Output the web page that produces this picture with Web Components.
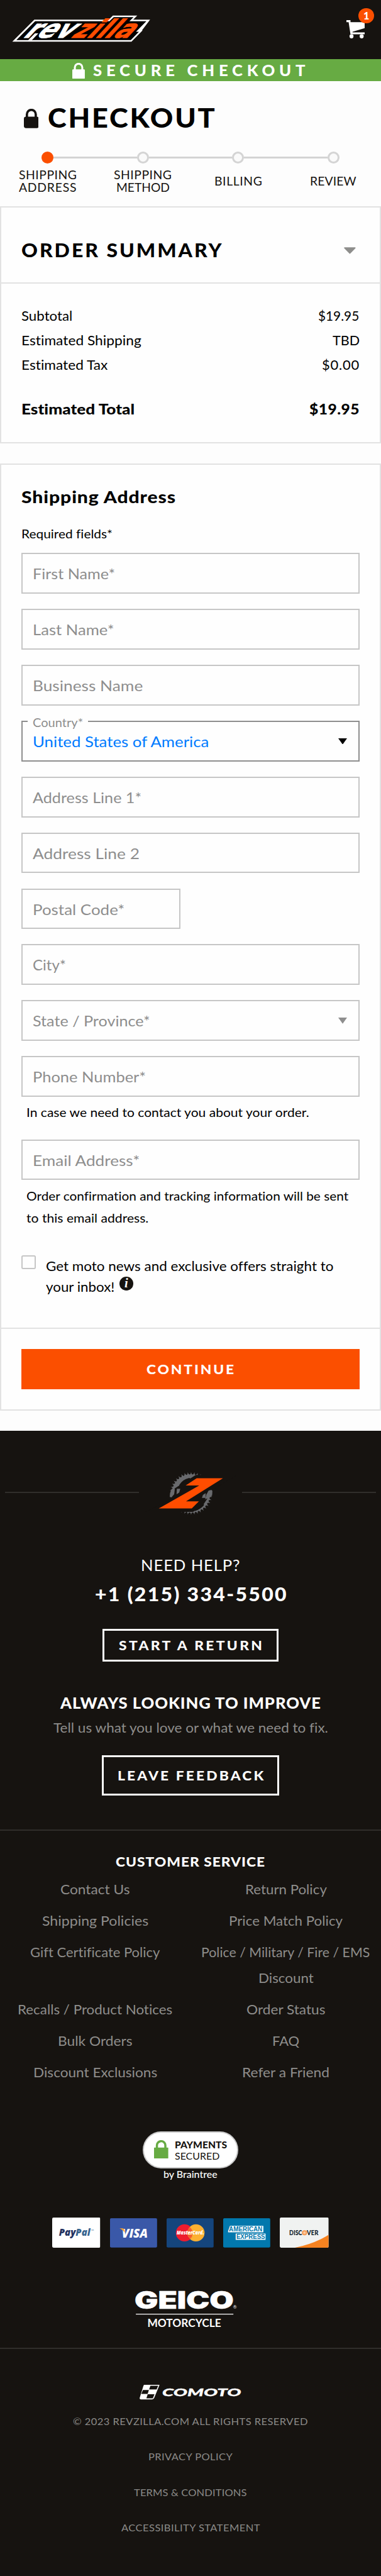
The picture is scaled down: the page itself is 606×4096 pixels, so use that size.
<!DOCTYPE html>
<html lang="en">
<head>
<meta charset="utf-8">
<title>RevZilla – Checkout</title>
<style>
/* 1rem = 100 design units on a 1125-unit wide page */
html{font-size:53.8667px}
body{margin:0;background:#fdfdfd;color:#000;font:400 .385rem/1.2 Lato,"Open Sans",sans-serif;overflow-x:hidden}
</style>
</head>
<body>
<checkout-page></checkout-page>
<script>
const define = (name, css, html, setup) => customElements.define(name, class extends HTMLElement {
  connectedCallback() {
    if (this.shadowRoot) return;
    const root = this.attachShadow({ mode: 'open' });
    const t = document.createElement('template');
    t.innerHTML = `<style>*{box-sizing:border-box}:host{display:block;box-sizing:border-box}svg{display:block}${css}</style>${typeof html === 'function' ? html(this) : html}`;
    root.append(t.content.cloneNode(true));
    if (setup) setup(this, root);
  }
});

/* One line of type, widened and tracked to a measure given in design units */
define('fit-text', `:host{display:inline-block;white-space:nowrap;text-align:left}span{display:inline-block;font-variant-ligatures:none;transform-origin:0 0}`,
  '<span><slot></slot></span>', (el, root) => {
    const span = root.querySelector('span');
    const fs = parseFloat(getComputedStyle(el).fontSize);
    const target = el.getAttribute('w') * .538667 + fs * .08;
    const natural = span.getBoundingClientRect().width;
    const text = el.textContent;
    const limit = text === text.toUpperCase() ? 1.06 : 1.13;
    const sx = Math.max(1, Math.min(limit, target / natural));
    span.style.letterSpacing = ((target / sx - natural) / (text.length - 1)).toFixed(3) + 'px';
    span.style.transform = `scaleX(${sx.toFixed(4)})`;
    el.style.width = target + 'px';
  });

define('brand-logo', `:host{width:4.1rem}svg{width:4.1rem;height:.8rem;overflow:visible}`, `
<svg viewBox="35 44 410 80" role="img" aria-label="RevZilla">
  <path d="M36 122.500 101 57.500H321L333 45.500H405L393 57.500H443L419 89H421L388 122.500Z" fill="#fff"/>
  <path d="M48 118 103.500 62H323L335.500 50H394L382 62H432L401.500 93H410L386 118Z" fill="#000"/>
  <path d="M83 118 103 98H113L94 118Z" fill="#fff"/>
  <g font-family="DejaVu Sans" font-weight="700" font-size="75" transform="translate(0 111) skewX(-43)">
    <text x="64" y="0" textLength="140" lengthAdjust="spacingAndGlyphs" fill="#fff" stroke="#fff" stroke-width="1.500">rev</text>
    <text x="207" y="0" textLength="174" lengthAdjust="spacingAndGlyphs" fill="#ff4d00" stroke="#ff4d00" stroke-width="1.500">zilla</text>
  </g>
</svg>`);

define('cart-button', `:host{position:relative;width:.54rem;height:.54rem}svg{width:.54rem;height:.54rem}
b{position:absolute;left:.36rem;top:-.36rem;width:.45rem;height:.45rem;border-radius:50%;background:#fb4f00;color:#fff;font:900 .3rem/.46rem Lato,sans-serif;text-align:center}`, `
<svg viewBox="0 0 54 54"><path d="M0 0H12V6H54V23.500L18 34.500V36H54V42H12L6.500 6H0Z" fill="#fff"/><circle cx="15" cy="48" r="6" fill="#fff"/><circle cx="45" cy="48" r="6" fill="#fff"/></svg><b>1</b>`);

define('site-header', `:host{display:flex;height:1.74rem;background:#161310;padding:.44rem .48rem 0 .35rem;justify-content:space-between}cart-button{margin-top:.16rem}`,
  `<brand-logo></brand-logo><cart-button></cart-button>`);

define('lock-icon', `:host{flex:none}svg{width:100%;height:100%}`, el => `
<svg viewBox="0 0 42 54" preserveAspectRatio="none"><path d="M8.500 24V15.500A12.500 12.500 0 0 1 33.500 15.500V24" fill="none" stroke="currentColor" stroke-width="6.500"/><rect y="22" width="42" height="32" rx="${el.getAttribute('r') || 3}" fill="currentColor"/></svg>`);

define('secure-banner', `:host{display:flex;height:.66rem;background:#67ab43;color:#fff;font-weight:900;font-size:.45rem;line-height:.66rem;padding-left:2.14rem}
lock-icon{width:.37rem;height:.47rem;margin:.12rem .23rem 0 0}`,
  `<lock-icon></lock-icon><fit-text w="623">SECURE CHECKOUT</fit-text>`);

define('page-heading', `:host{display:flex;padding:.59rem 0 0 .7rem;color:#161310}h1{margin:0;font-size:.79rem;line-height:.96rem;height:.96rem;font-weight:900;color:#000}
lock-icon{width:.44rem;height:.57rem;margin:.22rem .27rem 0 0}`,
  `<lock-icon r="6"></lock-icon><h1><fit-text w="487">CHECKOUT</fit-text></h1>`);

define('progress-step', `:host{flex:1;font-size:.34rem;line-height:.36rem;color:#161310;text-align:center}
.rail{display:flex;align-items:center}.rail i{flex:1;height:.06rem;background:#d4d4d4}
.dot{width:.36rem;height:.36rem;border-radius:50%;border:.06rem solid #d4d4d4;background:#fafafa}
:host([current]) .dot{background:#fb4f00;border-color:#fb4f00}
:host([first]) i:first-child,:host([last]) i:last-child{background:none}
.label{height:.72rem;margin-top:.17rem;display:flex;flex-direction:column;align-items:center;justify-content:center}::slotted(fit-text){height:.36rem}`,
  `<div class="rail"><i></i><div class="dot"></div><i></i></div><div class="label"><slot></slot></div>`);

define('progress-steps', `:host{display:flex;margin:.52rem 0 .37rem}`, `
<progress-step first current><fit-text w="168">SHIPPING</fit-text><fit-text w="167">ADDRESS</fit-text></progress-step>
<progress-step><fit-text w="168">SHIPPING</fit-text><fit-text w="155">METHOD</fit-text></progress-step>
<progress-step><fit-text w="138">BILLING</fit-text></progress-step>
<progress-step last><fit-text w="134">REVIEW</fit-text></progress-step>`);

define('panel-card', `:host{border:2px solid #e2e2e2;margin-bottom:.6rem;background:#fefefe}`, `<slot></slot>`);

define('summary-row', `:host{display:flex;justify-content:space-between;height:.72rem;line-height:.72rem;font-size:.385rem}
:host([total]){margin-top:.58rem;font-size:.43rem;font-weight:900}`, `<slot></slot>`);

define('order-summary', `header{display:flex;justify-content:space-between;align-items:center;height:2.243rem;padding:.29rem .7rem 0 .6rem;border-bottom:2px solid #e2e2e2}
h2{margin:0;font-size:.56rem;line-height:.6rem;font-weight:900;height:.6rem}svg{width:.35rem;height:.2rem;margin-top:.04rem}.rows{padding:.6rem .6rem .622rem}`, `
<header><h2><fit-text w="587">ORDER SUMMARY</fit-text></h2><svg viewBox="0 0 35 20"><path d="M2 2H33L17.500 18Z" fill="#8e8e8c" stroke="#8e8e8c" stroke-width="3" stroke-linejoin="round"/></svg></header>
<div class="rows">
<summary-row><fit-text w="148">Subtotal</fit-text><fit-text w="118">$19.95</fit-text></summary-row>
<summary-row><fit-text w="351">Estimated Shipping</fit-text><fit-text w="77">TBD</fit-text></summary-row>
<summary-row><fit-text w="252">Estimated Tax</fit-text><fit-text w="107">$0.00</fit-text></summary-row>
<summary-row total><fit-text w="331">Estimated Total</fit-text><fit-text w="144">$19.95</fit-text></summary-row>
</div>`);

define('form-field', `:host{display:flex;justify-content:space-between;align-items:center;position:relative;height:1.2rem;border:.04rem solid #c6c6c6;padding:.03rem .32rem 0 .29rem;font-size:.435rem;line-height:.6rem;color:#8e8e8e;margin-bottom:.45rem}
fit-text,::slotted(fit-text){height:.6rem}
:host([half]){width:4.7rem}:host([active]){border-color:#8e8e8e;color:#007bff}:host([tight]){margin-bottom:0}
svg{width:.26rem;height:.18rem;margin:-.03rem 0 0;color:#8e8e8e}:host([active]) svg{color:#000}
label{position:absolute;left:.14rem;top:-.23rem;width:1.78rem;height:.5rem;padding-left:.15rem;background:#fefefe;color:#8e8e8e;font-size:.35rem;line-height:.5rem}`,
  el => `${el.hasAttribute('label') ? `<label><fit-text w="146">${el.getAttribute('label')}</fit-text></label>` : ''}<slot></slot>${el.hasAttribute('select') ? '<svg viewBox="0 0 26 18"><path d="M0 0H26L13 18Z" fill="currentColor"/></svg>' : ''}`);

define('field-note', `:host{display:flex;flex-direction:column;align-items:flex-start;padding:.135rem 0 0 .14rem;font-size:.35rem;line-height:.66rem}::slotted(fit-text){height:.66rem}`, `<slot></slot>`);

define('info-icon', `:host{width:.4rem;height:.4rem;border-radius:50%;background:#161310;color:#fff;font:italic 700 .38rem/.4rem "Liberation Serif",serif;text-align:center}`, `i`);

define('news-opt-in', `:host{display:flex;margin-top:.765rem;font-size:.385rem;line-height:.6rem}
.box{flex:none;width:.42rem;height:.42rem;border:.04rem solid #c6c6c6;border-radius:.05rem;margin-right:.29rem}
.copy{padding-top:.03rem}.line{display:flex;height:.6rem}info-icon{margin:.01rem 0 0 .15rem}`, `
<div class="box"></div><div class="copy"><div class="line"><fit-text w="846">Get moto news and exclusive offers straight to</fit-text></div>
<div class="line"><fit-text w="200">your inbox!</fit-text><info-icon></info-icon></div></div>`);

define('action-button', `:host{display:flex;align-items:center;justify-content:center;height:1.2rem;background:#fb4f00;color:#fff;font-weight:900;font-size:.4rem;line-height:.6rem}`, `<slot></slot>`);

define('address-form', `.body{padding:.643rem .6rem .9rem}h3{margin:0 0 .555rem;font-size:.495rem;line-height:.6rem;height:.6rem;font-weight:900}
.req{font-size:.35rem;line-height:.5rem;height:.5rem;margin-bottom:.305rem}.gap{height:.465rem}.foot{border-top:2px solid #e2e2e2;padding:.595rem .6rem .59rem}`, `
<div class="body"><h3><fit-text w="451">Shipping Address</fit-text></h3>
<div class="req"><fit-text w="266">Required fields*</fit-text></div>
<form-field><fit-text w="240">First Name*</fit-text></form-field>
<form-field><fit-text w="237">Last Name*</fit-text></form-field>
<form-field><fit-text w="322">Business Name</fit-text></form-field>
<form-field active select label="Country*"><fit-text w="517">United States of America</fit-text></form-field>
<form-field><fit-text w="318">Address Line 1*</fit-text></form-field>
<form-field><fit-text w="312">Address Line 2</fit-text></form-field>
<form-field half><fit-text w="268">Postal Code*</fit-text></form-field>
<form-field><fit-text w="95">City*</fit-text></form-field>
<form-field select><fit-text w="343">State / Province*</fit-text></form-field>
<form-field tight><fit-text w="331">Phone Number*</fit-text></form-field>
<field-note><fit-text w="832">In case we need to contact you about your order.</fit-text></field-note>
<div class="gap"></div>
<form-field tight><fit-text w="313">Email Address*</fit-text></form-field>
<field-note><fit-text w="948">Order confirmation and tracking information will be sent</fit-text><fit-text w="358">to this email address.</fit-text></field-note>
<news-opt-in></news-opt-in></div>
<div class="foot"><action-button><fit-text w="255">CONTINUE</fit-text></action-button></div>`);

/* Chainring teeth: one outline that alternates between tip and root radii */
const ring = (() => {
  const n = 40, s = 2 * Math.PI / n;
  const p = (r, a) => `${(154 + r * Math.cos(a)).toFixed(1)} ${(73.5 + r * Math.sin(a)).toFixed(1)}`;
  let d = '';
  for (let i = 0; i < n; i++) d += `${i ? 'L' : 'M'}${p(63.5, i * s)}Q${p(56, (i + .15) * s)} ${p(56, (i + .5) * s)}Q${p(56, (i + .85) * s)} ${p(63.5, (i + 1) * s)}`;
  return d + 'Z';
})();
define('footer-emblem', `:host{display:flex;align-items:center;padding:1.11rem .15rem 0}i{flex:1;height:2px;background:#302e2b}svg{width:3.03rem;height:1.41rem}`, `
<i></i><svg viewBox="0 0 303 141"><path d="${ring}" fill="#696a6d"/><circle cx="154" cy="73.500" r="45" fill="#161310"/>
<path d="M104 60C108 44 124 28 146 22L168 19 110 58Z" fill="#696a6d"/>
<path d="M123 50C129 40 139 34 148 32" stroke="#161310" stroke-width="8" stroke-linecap="round" fill="none"/>
<path d="M188 107C182 113 175 118 166 121" stroke="#161310" stroke-width="8" stroke-linecap="round" fill="none"/>
<path d="M20 128 96 89 104 60 168 19H290L216 63 206 65 188 96 204 86 192 104 160 128Z" fill="#161310"/>
<path d="M97 60H106L104 76 96 85 91 84C91 76 93 66 97 60Z M204 68 213 64 217 66 216 80 203 88 199 90 204 80Z" fill="#696a6d"/>
<path d="M112 60H122L119 71 111 76Z M197 73V87H186L189 78Z" fill="#696a6d"/>
<path d="M170.500 29H248L139 97H177L156 118H58.500L178 50H138Z" fill="#ff4d00"/></svg><i></i>`);

define('outline-button', `:host{display:flex;align-items:center;justify-content:center;width:5.21rem;height:.96rem;border:.06rem solid #fff;margin:0 auto;color:#fff;font-weight:900;font-size:.4rem;line-height:.6rem}
:host([tall]){width:5.25rem;height:1.2rem}`, `<slot></slot>`);

define('help-block', `:host{display:flex;flex-direction:column;align-items:center;color:#fff;padding-bottom:.99rem;border-bottom:2px solid #302e2b}
fit-text{height:.6rem;line-height:.6rem}.q{font-size:.45rem;margin-top:1.146rem}.tel{font-size:.56rem;font-weight:900;height:.7rem;line-height:.7rem;margin:.207rem 0 .677rem}
.big{font-size:.45rem;font-weight:900;margin-top:.933rem}.sub{font-size:.39rem;color:#8e8d8b;margin:.119rem 0 .508rem}`, `
<fit-text class="q" w="289">NEED HELP?</fit-text><fit-text class="tel" w="561">+1 (215) 334-5500</fit-text>
<outline-button><fit-text w="420">START A RETURN</fit-text></outline-button>
<fit-text class="big" w="765">ALWAYS LOOKING TO IMPROVE</fit-text><fit-text class="sub" w="808">Tell us what you love or what we need to fix.</fit-text>
<outline-button tall><fit-text w="428">LEAVE FEEDBACK</fit-text></outline-button>`);

define('service-links', `:host{padding-top:.62rem;text-align:center;color:#8e8d8b;font-size:.39rem;line-height:.75rem}
h4{margin:0 0 .139rem;height:.6rem;font-size:.4rem;line-height:.6rem;font-weight:900;color:#fff}
nav{display:grid;grid-template-columns:1fr 1fr;row-gap:.182rem}nav div{display:flex;flex-direction:column;align-items:center}nav fit-text{height:.75rem}`, `
<h4><fit-text w="437">CUSTOMER SERVICE</fit-text></h4>
<nav><div><fit-text w="202">Contact Us</fit-text></div><div><fit-text w="238">Return Policy</fit-text></div>
<div><fit-text w="311">Shipping Policies</fit-text></div><div><fit-text w="333">Price Match Policy</fit-text></div>
<div><fit-text w="380">Gift Certificate Policy</fit-text></div><div><fit-text w="495">Police / Military / Fire / EMS</fit-text><fit-text w="160">Discount</fit-text></div>
<div><fit-text w="454">Recalls / Product Notices</fit-text></div><div><fit-text w="230">Order Status</fit-text></div>
<div><fit-text w="217">Bulk Orders</fit-text></div><div><fit-text w="77">FAQ</fit-text></div>
<div><fit-text w="363">Discount Exclusions</fit-text></div><div><fit-text w="255">Refer a Friend</fit-text></div></nav>`);

define('secured-badge', `:host{display:flex;flex-direction:column;align-items:center;margin-top:1.37rem;color:#fff;font-size:.285rem}
.pill{display:flex;width:2.83rem;height:1.086rem;border:.04rem solid #c8c8c8;border-radius:.55rem;background:#fff;color:#161310;padding:.2rem 0 0 .31rem;line-height:.33rem}
lock-icon{width:.42rem;height:.54rem;color:#67ab43;margin:.02rem .18rem 0 0}.pill div{display:flex;flex-direction:column}.pill fit-text{height:.33rem}b{font-weight:900;height:.33rem;display:block}
.by{line-height:.34rem;height:.34rem;font-weight:500}`, `
<div class="pill"><lock-icon r="1"></lock-icon><div><b><fit-text w="152">PAYMENTS</fit-text></b><fit-text w="130">SECURED</fit-text></div></div>
<fit-text class="by" w="157">by Braintree</fit-text>`);

define('payment-card', `svg{width:100%;height:100%;border-radius:.04rem}:host{height:.87rem;width:1.395rem}:host([kind=paypal]){width:1.415rem;height:.9rem}:host([kind=discover]){width:1.44rem;height:.9rem}`, el => ({
paypal: `<svg viewBox="0 0 142 90"><rect width="142" height="90" fill="#fff"/><text x="20" y="54" font-family="Open Sans" font-style="italic" font-weight="800" font-size="28" textLength="93" lengthAdjust="spacingAndGlyphs" fill="#24325f">Pay<tspan fill="#37648f">Pal</tspan></text><text x="116" y="39" font-family="Lato" font-size="6" fill="#37648f">tm</text></svg>`,
visa: `<svg viewBox="0 0 140 87"><rect width="140" height="87" fill="#2e4a92"/><rect width="138" height="85" x="0" y="1" rx="2" fill="#3a58a8"/><text x="35" y="57" font-family="Open Sans" font-style="italic" font-weight="800" font-size="37" textLength="77" lengthAdjust="spacingAndGlyphs" fill="#fff">VISA</text><path d="M28 30H38Q42 31 43 36L44 43Q38 34 28 30Z" fill="#f9a533"/></svg>`,
mastercard: `<svg viewBox="0 0 140 87"><rect width="140" height="87" fill="#103763"/><rect width="138" height="85" y="1" rx="2" fill="#15457c"/><circle cx="53" cy="43.500" r="25.500" fill="#ed1c2e"/><circle cx="87" cy="43.500" r="25.500" fill="#fcb131"/><path d="M65 27H70M64 31H73M63 35H75M63 39H76M63 47H77M63 51H76M64 55H75M65 59H72" stroke="#ed1c2e" stroke-width="2"/><text x="30" y="49" font-family="Open Sans" font-style="italic" font-weight="800" font-size="17" textLength="81" lengthAdjust="spacingAndGlyphs" fill="#fff">MasterCard.</text></svg>`,
amex: `<svg viewBox="0 0 140 87"><rect width="140" height="87" fill="#016391"/><rect width="138" height="85" y="1" rx="2" fill="#0278ad"/><path d="M20 22.500H119V42H14.500V38Z M37 45.500H125.500V64H37Z" fill="#fff"/><g font-family="Liberation Sans" font-weight="700" font-size="19" fill="#0278ad"><text x="17" y="39" textLength="99" lengthAdjust="spacingAndGlyphs">AMERICAN</text><text x="39" y="61" textLength="85" lengthAdjust="spacingAndGlyphs">EXPRESS</text></g></svg>`,
discover: `<svg viewBox="0 0 144 90"><defs><radialGradient id="o"><stop offset="0" stop-color="#fbe0c4"/><stop offset="1" stop-color="#f58634"/></radialGradient></defs><rect width="144" height="90" fill="#f0f2f1"/><path d="M40 90Q100 79 144 51V90Z" fill="#f58220"/><g font-family="Lato" font-weight="900" font-size="19.500" fill="#10222b"><text x="28" y="52" textLength="38" lengthAdjust="spacingAndGlyphs">DISC</text><text x="80" y="52" textLength="34" lengthAdjust="spacingAndGlyphs">VER</text></g><circle cx="73" cy="45" r="7.500" fill="url(#o)"/></svg>`
})[el.getAttribute('kind')]);

define('payment-methods', `:host{display:flex;justify-content:space-between;align-items:center;height:.9rem;margin:1.11rem 1.54rem 0 1.55rem}`,
  ['paypal', 'visa', 'mastercard', 'amex', 'discover'].map(k => `<payment-card kind="${k}"></payment-card>`).join(''));

define('insurance-partner', `:host{padding:1.29rem 0 .6rem 3.99rem;border-bottom:2px solid #302e2b}svg{width:3.02rem;height:1.05rem;overflow:visible}`, `
<svg viewBox="0 0 302 105"><text x="-2" y="51" font-family="Inter" font-weight="900" font-size="70" textLength="293" lengthAdjust="spacingAndGlyphs" fill="#fff" stroke="#fff">GEICO</text><text x="289" y="50" font-family="Lato" font-size="13" fill="#fff">®</text><path d="M2 66H290" stroke="#fff" stroke-width="2.200"/><text x="36" y="104.500" font-family="Lato" font-weight="700" font-size="31" textLength="218" lengthAdjust="spacingAndGlyphs" fill="#fff">MOTORCYCLE</text></svg>`);

define('legal-footer', `:host{display:flex;flex-direction:column;align-items:center;padding-top:1.07rem;color:#8a8987;font-size:.29rem;line-height:1.05rem}
svg{width:3rem;height:.43rem;margin-bottom:.113rem}fit-text{height:1.05rem}`, `
<svg viewBox="413 7040 300 43"><path d="M427 7040H472L456 7079Q454 7083 450 7083H417Q412 7083 413.500 7078L424 7044Q425 7040 427 7040Z" fill="#fff"/><path d="M445 7043H468L463 7054H441Z M423 7055.500H441L437 7067H418Z M437 7068H457L452 7080H433Z" fill="#161310"/><path d="M441 7054.500H462L457 7067.500H437Z" fill="#fff"/>
<text x="480" y="7074" font-family="Lato" font-style="italic" font-weight="900" font-size="31" textLength="233" lengthAdjust="spacingAndGlyphs" fill="#fff" stroke="#fff" stroke-width=".6">COMOTO</text></svg>
<fit-text w="691">© 2023 REVZILLA.COM ALL RIGHTS RESERVED</fit-text><fit-text w="246">PRIVACY POLICY</fit-text><fit-text w="331">TERMS &amp; CONDITIONS</fit-text><fit-text w="407">ACCESSIBILITY STATEMENT</fit-text>`);

define('site-footer', `:host{background:#161310;height:33.82rem;overflow:hidden}`, `
<footer-emblem></footer-emblem><help-block></help-block><service-links></service-links><secured-badge></secured-badge><payment-methods></payment-methods><insurance-partner></insurance-partner><legal-footer></legal-footer>`);

define('checkout-page', `:host{width:11.25rem;height:76.04rem;overflow:hidden}`, `
<site-header></site-header><secure-banner></secure-banner><page-heading></page-heading><progress-steps></progress-steps>
<panel-card><order-summary></order-summary></panel-card><panel-card><address-form></address-form></panel-card><site-footer></site-footer>`);
</script>
</body>
</html>
